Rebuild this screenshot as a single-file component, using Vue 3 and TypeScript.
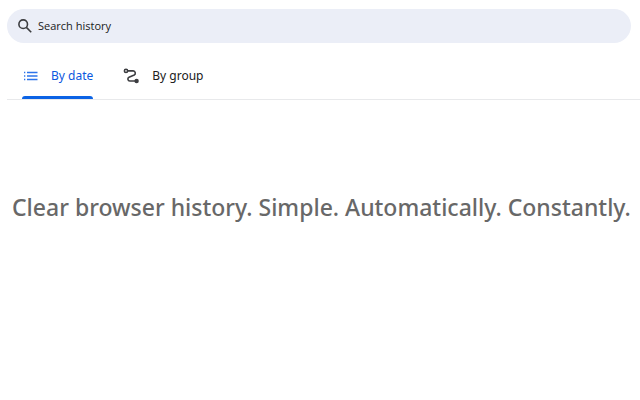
<script setup lang="ts">
import { ref } from 'vue'

type View = 'date' | 'group'
const view = ref<View>('date')
const query = ref('')
</script>

<template>
  <main class="history">
    <label class="search">
      <svg class="search-icon" viewBox="0 0 14 14" aria-hidden="true">
        <circle cx="5.2" cy="5.2" r="4.3" />
        <path d="M8.4 8.4 13.2 13.2" />
      </svg>
      <input v-model="query" type="search" placeholder="Search history" aria-label="Search history" />
    </label>

    <nav class="tabs" role="tablist">
      <button class="tab" :class="{ active: view === 'date' }" type="button" role="tab"
        :aria-selected="view === 'date'" @click="view = 'date'">
        <svg class="tab-icon" viewBox="0 0 17 16" aria-hidden="true">
          <path class="list-lines" d="M5 4.5h10.5M5 8h10.5M5 11.5h10.5M2 4.5h1.3M2 8h1.3M2 11.5h1.3" />
        </svg>
        <span>By date</span>
      </button>
      <button class="tab" :class="{ active: view === 'group' }" type="button" role="tab"
        :aria-selected="view === 'group'" @click="view = 'group'">
        <svg class="tab-icon" viewBox="0 0 17 16" aria-hidden="true">
          <circle class="ring" cx="3" cy="2.9" r="1.6" />
          <path class="route" d="M4.8 2.9h5.4a2.2 2.2 0 0 1 1 4.1L6 9.2a2 2 0 0 0 .8 3.8H12" />
          <circle class="dot" cx="13.6" cy="13" r="2.2" />
        </svg>
        <span>By group</span>
      </button>
    </nav>

    <h1>Clear browser history. Simple. Automatically. Constantly.</h1>
  </main>
</template>

<style>
body {
  background: #fff;
}
</style>

<style scoped>
.history {
  padding: 9px 0 0 7px;
  font-family: "Noto Sans", "Open Sans", sans-serif;
  color: #303030;
}

.search {
  display: flex;
  align-items: center;
  gap: 6px;
  height: 34px;
  margin-right: 9px;
  padding: 0 11px;
  border-radius: 17px;
  background: #ebeef7;
  box-sizing: border-box;
}

.search-icon {
  flex: none;
  width: 14px;
  height: 14px;
  fill: none;
  stroke: #3c3d40;
  stroke-width: 1.6;
}

input {
  flex: 1;
  min-width: 0;
  padding: 0;
  border: 0;
  outline: 0;
  background: none;
  font: 11px/16px "Open Sans", "Noto Sans", sans-serif;
  color: #202020;
  appearance: none;
}

input::placeholder {
  color: #202020;
  opacity: 1;
}

.tabs {
  display: flex;
  gap: 30px;
  margin-top: 10px;
  padding-left: 15px;
  border-bottom: 1px solid #e8e9eb;
}

.tab {
  display: flex;
  align-items: center;
  gap: 12px;
  height: 46px;
  padding: 0;
  border: 0;
  background: none;
  font: 12px/18px "Noto Sans", "Open Sans", sans-serif;
  color: #202020;
  white-space: nowrap;
  cursor: pointer;
  position: relative;
}

.tab.active {
  color: #0b57e0;
}

.tab.active::after {
  content: "";
  position: absolute;
  right: 0;
  bottom: 0;
  left: 0;
  height: 3px;
  border-radius: 3px 3px 0 0;
  background: #0b63e5;
}

.tab-icon {
  flex: none;
  width: 17px;
  height: 16px;
  fill: none;
  stroke: #3c3d40;
  stroke-width: 1.6;
}

.list-lines {
  stroke: #2d74ea;
  stroke-width: 1.4;
}

.dot {
  fill: #3c3d40;
  stroke: none;
}

h1 {
  margin: 88px 8px 0 5px;
  font-size: 23px;
  line-height: 38px;
  font-weight: 500;
  color: #686868;
}
</style>
